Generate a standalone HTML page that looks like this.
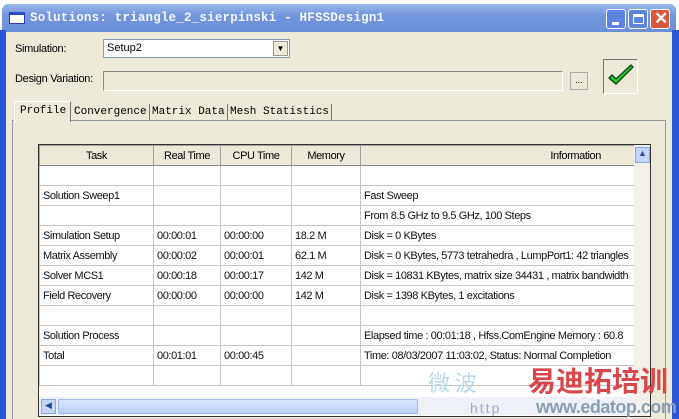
<!DOCTYPE html>
<html><head><meta charset="utf-8"><style>
*{box-sizing:border-box;margin:0;padding:0}
html,body{width:679px;height:419px;overflow:hidden}
body{background:#fff;font-family:"Liberation Sans",Arial,sans-serif;font-size:11px;color:#000;position:relative}
.win{position:absolute;left:2px;top:4px;width:674px;height:415px;background:#0a3fd0;border-radius:7px 7px 0 0}
.title{position:absolute;left:0;top:0;width:674px;height:28px;border-radius:7px 7px 0 0;background:linear-gradient(#9ab8ec,#7396dd 40%,#6a8fd9);}
.title span{position:absolute;left:28px;top:7px;font-family:"Liberation Mono",monospace;font-weight:bold;font-size:12.5px;color:#f4f6ff;letter-spacing:0.2px}
.ico{position:absolute;left:7px;top:8px;width:16px;height:12px;background:#fff;border:1px solid #33c;border-top:3px solid #2850c0}
.btn{position:absolute;top:5px;width:20px;height:20px;border:1px solid #fff;border-radius:3px;background:#5b85e0}
.lbl{position:absolute;font-size:11px;letter-spacing:-0.3px}
.abs{position:absolute;white-space:nowrap}
table{border-collapse:collapse;position:absolute;background:#fff}
td{height:20px;border:1px solid #c8c6c0;padding:0 3px;white-space:nowrap;overflow:hidden;font-size:11px;color:#111;letter-spacing:-0.4px}
th{height:20px;background:#ece9d8;border:1px solid #a0a0a0;border-bottom:1px solid #888;font-weight:normal;font-size:11px;letter-spacing:-0.4px}
</style></head><body>
<div class="win">
 <div class="title"><div class="ico"></div><span>Solutions: triangle_2_sierpinski - HFSSDesign1</span>
  <div class="btn" style="left:604px"><div class="abs" style="left:5px;top:12px;width:7px;height:3px;background:#fff"></div></div>
  <div class="btn" style="left:626px"><div class="abs" style="left:4px;top:4px;width:11px;height:10px;border:1px solid #fff;border-top:3px solid #fff"></div></div>
  <div class="btn" style="left:648px;background:#d8583c"><div class="abs" style="left:3px;top:-1px;color:#fff;font-size:17px;font-weight:bold">✕</div></div>
 </div>
</div>
<div class="abs" style="left:6px;top:32px;width:666px;height:387px;background:#ece9d8"></div>
<div class="lbl" style="left:15px;top:43px">Simulation:</div>
<div class="abs" style="left:103px;top:39px;width:187px;height:19px;background:#fff;border:1px solid #7f9db9;padding:2px 3px">Setup2</div>
<div class="abs" style="left:273px;top:41px;width:15px;height:15px;background:#ece9d8;border:1px solid #999;font-size:8px;text-align:center;line-height:14px">▼</div>
<div class="lbl" style="left:15px;top:73px">Design Variation:</div>
<div class="abs" style="left:103px;top:71px;width:460px;height:20px;border:1px solid #fff;border-top-color:#888;border-left-color:#888"></div>
<div class="abs" style="left:570px;top:72px;width:18px;height:18px;border:1px solid #aaa;background:#ece9d8;font-size:9px;text-align:center;line-height:14px">...</div>
<div class="abs" style="left:603px;top:59px;width:35px;height:35px;border:1px solid #fff;border-top-color:#777;border-left-color:#777">
<svg width="33" height="33" viewBox="0 0 33 33"><path d="M5 18 L12 24 L29 7 L27 5 L12 19 L8 15 Z" fill="#2ecc2e" stroke="#175017" stroke-width="1.5" stroke-linejoin="round"/></svg></div>
<div class="abs" style="left:12px;top:120px;width:654px;height:300px;border:1px solid #919b9c;border-bottom:none"></div>
<div class="abs" style="left:14px;top:101px;width:57px;height:21px;background:#ece9d8;border:1px solid #fff;border-right:1px solid #777;border-bottom:none;font-family:'Liberation Mono',monospace;font-size:11px;padding:3px 5px">Profile</div>
<div class="abs" style="left:72px;top:104px;font-family:'Liberation Mono',monospace;font-size:11px;padding:2px 2px;border-right:1px solid #777">Convergence</div>
<div class="abs" style="left:150px;top:104px;font-family:'Liberation Mono',monospace;font-size:11px;padding:2px 2px;border-right:1px solid #777">Matrix Data</div>
<div class="abs" style="left:228px;top:104px;font-family:'Liberation Mono',monospace;font-size:11px;padding:2px 2px;border-right:1px solid #777">Mesh Statistics</div>
<div class="abs" style="left:38px;top:144px;width:613px;height:273px;border:1px solid #333;background:#fff;overflow:hidden">
<table style="left:0;top:0;table-layout:fixed;width:596px">
<colgroup><col style="width:114px"><col style="width:67px"><col style="width:71px"><col style="width:69px"><col style="width:275px"></colgroup>
<tr><th>Task</th><th>Real Time</th><th>CPU Time</th><th>Memory</th><th style="text-align:right;padding-right:34px">Information</th></tr>
<tr><td></td><td></td><td></td><td></td><td></td></tr>
<tr><td>Solution Sweep1</td><td></td><td></td><td></td><td>Fast Sweep</td></tr>
<tr><td></td><td></td><td></td><td></td><td>From 8.5 GHz to 9.5 GHz, 100 Steps</td></tr>
<tr><td>Simulation Setup</td><td>00:00:01</td><td>00:00:00</td><td>18.2 M</td><td>Disk = 0 KBytes</td></tr>
<tr><td>Matrix Assembly</td><td>00:00:02</td><td>00:00:01</td><td>62.1 M</td><td>Disk = 0 KBytes, 5773 tetrahedra , LumpPort1: 42 triangles</td></tr>
<tr><td>Solver MCS1</td><td>00:00:18</td><td>00:00:17</td><td>142 M</td><td>Disk = 10831 KBytes, matrix size 34431 , matrix bandwidth</td></tr>
<tr><td>Field Recovery</td><td>00:00:00</td><td>00:00:00</td><td>142 M</td><td>Disk = 1398 KBytes, 1 excitations</td></tr>
<tr><td></td><td></td><td></td><td></td><td></td></tr>
<tr><td>Solution Process</td><td></td><td></td><td></td><td>Elapsed time : 00:01:18 , Hfss.ComEngine Memory : 60.8</td></tr>
<tr><td>Total</td><td>00:01:01</td><td>00:00:45</td><td></td><td>Time:  08/03/2007 11:03:02, Status: Normal Completion</td></tr>
<tr><td></td><td></td><td></td><td></td><td></td></tr>
</table>
<div class="abs" style="left:595px;top:0;width:17px;height:273px;background:#f3f1ea"></div>
<div class="abs" style="left:596px;top:2px;width:15px;height:16px;background:#c6d6fa;border:1px solid #8aa6e0;font-size:9px;text-align:center;color:#2a4ba0">▲</div>
<div class="abs" style="left:0;top:252px;width:595px;height:18px;background:#eef0f8"></div>
<div class="abs" style="left:2px;top:254px;width:15px;height:15px;background:#c6d6fa;border:1px solid #8aa6e0;font-size:9px;text-align:center;color:#2a4ba0">◀</div>
<div class="abs" style="left:19px;top:254px;width:360px;height:15px;background:linear-gradient(#dbe6fc,#b9cdf6);border:1px solid #9fb6e8;border-radius:2px"></div>
</div>
<div class="abs" style="left:672px;top:30px;width:7px;height:389px;background:#2a57d8"></div>
<div class="abs" style="left:0;top:30px;width:6px;height:389px;background:#2a57d8"></div>
<div class="abs" style="left:428px;top:370px;font-family:'Noto Sans CJK SC',sans-serif;font-size:22px;line-height:24px;color:#b8dbe8">微 波</div>
<div class="abs" style="left:528px;top:364px;font-family:'Noto Sans CJK SC',sans-serif;font-size:28px;line-height:32px;font-weight:bold;color:#d9474a">易迪拓培训</div>
<div class="abs" style="left:470px;top:400px;font-size:14px;line-height:16px;color:#9ac;letter-spacing:2px">http</div>
<div class="abs" style="left:536px;top:397px;font-size:18px;line-height:20px;font-weight:bold;color:#8aa0b0;letter-spacing:-0.5px">www.edatop.com</div>
</body></html>
